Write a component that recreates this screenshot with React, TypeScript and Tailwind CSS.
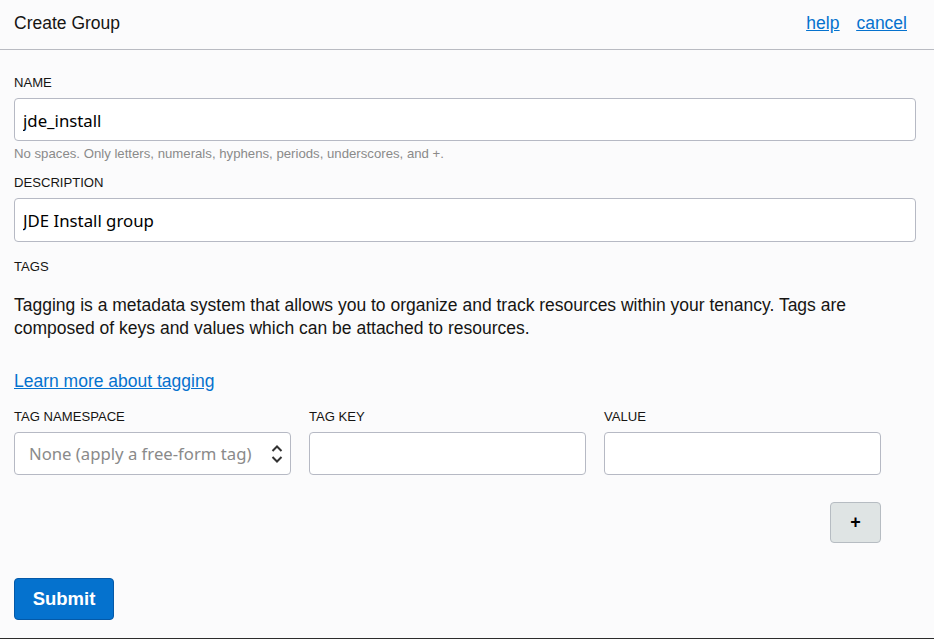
const labelClass = "block text-[13.1px] leading-[16px] text-[#161513]";
const inputClass =
  "block w-full h-[43px] rounded-[4px] border border-[#b6b9c4] bg-white px-[8px] font-['Noto_Sans',sans-serif] text-[16.8px] text-black outline-none";

export default function App() {
  return (
    <div className="h-[639px] w-[934px] overflow-hidden border-b border-b-[#2c2c2c] bg-[#fbfbfc] font-['Liberation_Sans',Arial,sans-serif]">
      <header className="flex h-[50px] items-center justify-between border-b border-[#b9bbc2] pl-[14px] pr-[27px] pb-[3px]">
        <h1 className="text-[17.5px] text-[#161513]">Create Group</h1>
        <div className="flex gap-[17px] text-[17.5px] text-[#0572ce] underline">
          <a href="#">help</a>
          <a href="#">cancel</a>
        </div>
      </header>

      <form className="pl-[14px] pr-[18px] pt-[25px]">
        <label className={labelClass}>NAME</label>
        <input className={`${inputClass} mt-[7px] pt-[2px]`} defaultValue="jde_install" />
        <p className="mt-[5px] h-[16px] text-[13.2px] leading-[16px] text-[#8a8a8a]">
          No spaces. Only letters, numerals, hyphens, periods, underscores, and +.
        </p>

        <label className={`${labelClass} mt-[13px]`}>DESCRIPTION</label>
        <input className={`${inputClass} mt-[7px] h-[44px]`} defaultValue="JDE Install group" />

        <label className={`${labelClass} mt-[17px]`}>TAGS</label>
        <p className="mt-[19px] text-[17.5px] leading-[23px] text-[#161513]">
          Tagging is a metadata system that allows you to organize and track resources within your tenancy. Tags are
          <br />
          composed of keys and values which can be attached to resources.
        </p>

        <a href="#" className="mt-[30px] block w-fit text-[17.5px] leading-[23px] text-[#0572ce] underline">
          Learn more about tagging
        </a>

        <div className="mt-[16px] flex gap-[18px]">
          <div className="w-[277px]">
            <label className={labelClass}>TAG NAMESPACE</label>
            <div className="relative mt-[7px]">
              <div className="flex h-[43px] items-center rounded-[4px] border border-[#b6b9c4] bg-white pl-[14px] font-['Noto_Sans',sans-serif] text-[16.7px] whitespace-nowrap text-[#8a8a8a]">
                None (apply a free-form tag)
              </div>
              {/* select arrows */}
              <svg className="absolute right-[8px] top-[12px] h-[20px] w-[12px]" viewBox="0 0 12 20" fill="none">
                <path d="M1.5 7 L6 2.5 L10.5 7" stroke="#333" strokeWidth="2" />
                <path d="M1.5 13 L6 17.5 L10.5 13" stroke="#333" strokeWidth="2" />
              </svg>
            </div>
          </div>
          <div className="w-[277px]">
            <label className={labelClass}>TAG KEY</label>
            <input className={`${inputClass} mt-[7px]`} />
          </div>
          <div className="w-[277px]">
            <label className={labelClass}>VALUE</label>
            <input className={`${inputClass} mt-[7px]`} />
          </div>
        </div>

        <div className="mt-[27px] flex w-[867px] justify-end">
          <button
            type="button"
            className="h-[41px] w-[51px] rounded-[4px] border border-[#b6bcc2] bg-[#dfe4e4] text-[18px] font-bold text-black"
          >
            +
          </button>
        </div>

        <button
          type="button"
          className="mt-[35px] block h-[42px] w-[100px] rounded-[4px] border border-[#0459a8] bg-[#0572ce] text-[18.5px] font-bold text-white"
        >
          Submit
        </button>
      </form>
    </div>
  );
}
